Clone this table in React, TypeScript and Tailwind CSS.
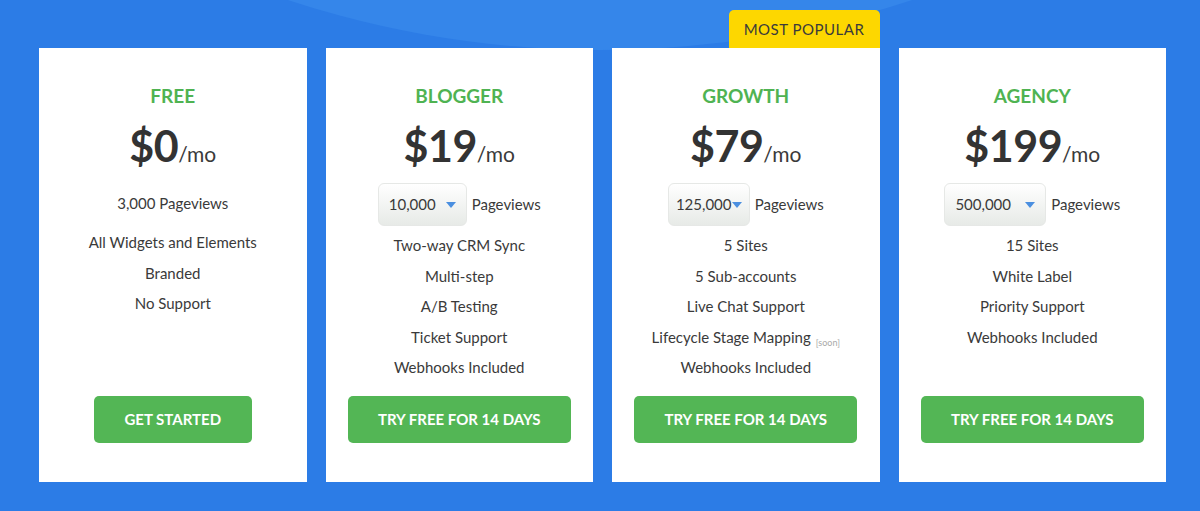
import React from "react";

type Plan = {
  name: string;
  price: string;
  pageviews: string;
  select?: { value: string; width: string; caret: string };
  features: { text: string; soon?: boolean }[];
  cta: string;
  ctaWidth: string;
  popular?: boolean;
};

const plans: Plan[] = [
  {
    name: "FREE",
    price: "$0",
    pageviews: "3,000 Pageviews",
    features: [
      { text: "All Widgets and Elements" },
      { text: "Branded" },
      { text: "No Support" },
    ],
    cta: "GET STARTED",
    ctaWidth: "w-[158px]",
  },
  {
    name: "BLOGGER",
    price: "$19",
    pageviews: "Pageviews",
    select: { value: "10,000", width: "w-[89px]", caret: "ml-[10px]" },
    features: [
      { text: "Two-way CRM Sync" },
      { text: "Multi-step" },
      { text: "A/B Testing" },
      { text: "Ticket Support" },
      { text: "Webhooks Included" },
    ],
    cta: "TRY FREE FOR 14 DAYS",
    ctaWidth: "w-[223px]",
  },
  {
    name: "GROWTH",
    price: "$79",
    pageviews: "Pageviews",
    select: { value: "125,000", width: "w-[82px]", caret: "ml-0" },
    features: [
      { text: "5 Sites" },
      { text: "5 Sub-accounts" },
      { text: "Live Chat Support" },
      { text: "Lifecycle Stage Mapping", soon: true },
      { text: "Webhooks Included" },
    ],
    cta: "TRY FREE FOR 14 DAYS",
    ctaWidth: "w-[223px]",
    popular: true,
  },
  {
    name: "AGENCY",
    price: "$199",
    pageviews: "Pageviews",
    select: { value: "500,000", width: "w-[102px]", caret: "ml-[14px]" },
    features: [
      { text: "15 Sites" },
      { text: "White Label" },
      { text: "Priority Support" },
      { text: "Webhooks Included" },
    ],
    cta: "TRY FREE FOR 14 DAYS",
    ctaWidth: "w-[223px]",
  },
];

function Caret({ className }: { className: string }) {
  return (
    <svg width="10" height="6" viewBox="0 0 10 6" className={className}>
      <path d="M0 0 L10 0 L5 6 Z" fill="#4a8fe0" />
    </svg>
  );
}

function PlanCard({ plan }: { plan: Plan }) {
  return (
    <div className="relative flex h-[434px] flex-col items-center bg-white pt-[36px] pb-[39px] text-[#3a3a3a]">
      {plan.popular && (
        <div className="absolute -top-[38px] right-0 flex h-[38px] w-[151px] items-center justify-center rounded-t-[5px] bg-[#fdd700] text-[15px] tracking-[0.5px] text-[#3b3b3b]">
          MOST POPULAR
        </div>
      )}

      {/* Name + price */}
      <div className="text-[19px] font-bold leading-[24px] text-[#4fb352]">
        {plan.name}
      </div>
      <div className="mt-[13px] flex items-baseline leading-[50px]">
        <span className="text-[43px] font-bold tracking-[-0.5px] text-[#333]">
          {plan.price}
        </span>
        <span className="text-[21px] text-[#3a3a3a]">/mo</span>
      </div>

      {/* Pageviews */}
      {plan.select ? (
        <div className="mt-[4px] flex items-center gap-[5px] text-[15px]">
          <div
            className={`flex h-[43px] items-center justify-center rounded-[6px] border border-[#e6e8e6] bg-gradient-to-b from-white to-[#e7eae7] ${plan.select.width}`}
          >
            <span>{plan.select.value}</span>
            <Caret className={plan.select.caret} />
          </div>
          <span>{plan.pageviews}</span>
        </div>
      ) : (
        <div className="mt-[9px] text-[15px] leading-[30px]">
          {plan.pageviews}
        </div>
      )}

      {/* Features */}
      <ul
        className={`flex flex-col items-center text-[15px] leading-[30.5px] ${
          plan.select ? "mt-[4px]" : "mt-[9px]"
        }`}
      >
        {plan.features.map((f) => (
          <li key={f.text} className="h-[30.5px]">
            {f.text}
            {f.soon && (
              <span className="ml-[5px] align-[-3px] text-[9px] leading-none text-[#a9a9a9]">
                [soon]
              </span>
            )}
          </li>
        ))}
      </ul>

      <button
        className={`mt-auto h-[47px] rounded-[5px] bg-[#53b655] text-[15px] font-bold text-white ${plan.ctaWidth}`}
      >
        {plan.cta}
      </button>
    </div>
  );
}

export default function App() {
  return (
    <div
      className="relative h-[511px] w-[1200px] overflow-hidden bg-[#2c7ce6]"
      style={{ fontFamily: "Lato, 'Open Sans', sans-serif" }}
    >
      {/* top arc */}
      <div className="absolute left-[-300px] top-[-1560px] h-[1610px] w-[1800px] rounded-[50%] bg-[#3586ea]" />

      <div className="relative grid grid-cols-4 gap-[19px] pt-[48px] pl-[39px] pr-[34px]">
        {plans.map((p) => (
          <PlanCard key={p.name} plan={p} />
        ))}
      </div>
    </div>
  );
}
